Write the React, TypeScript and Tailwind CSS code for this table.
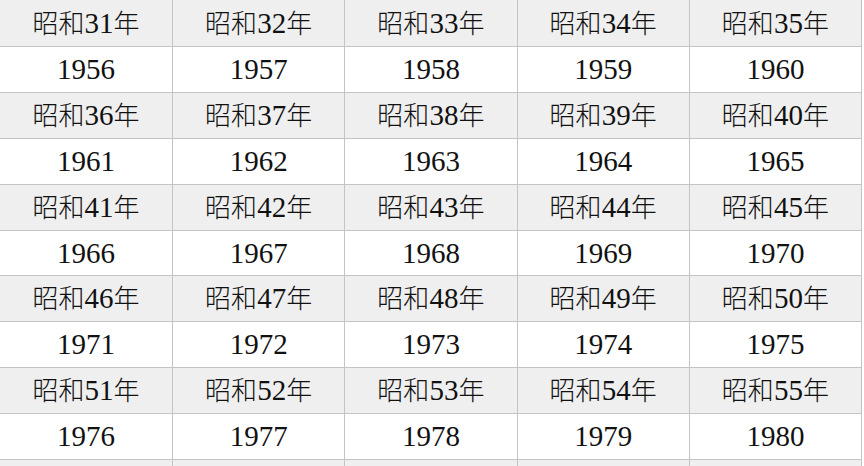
import React from "react";

const starts = [31, 36, 41, 46, 51];

function EraCell({ n, first }: { n: number; first: boolean }) {
  return (
    <div
      className={
        (first ? "h-[47px] " : "h-[45.9px] ") +
        "flex items-center justify-center border-r border-b border-[#c4c4c4] bg-[#efefef] text-[#111]"
      }
    >
      <span className="whitespace-nowrap leading-none">
        <span className="font-['Noto_Sans_CJK_JP',sans-serif] text-[26px] font-light">昭和</span>
        <span className="font-['Liberation_Serif',serif] text-[29px]">{n}</span>
        <span className="font-['Noto_Sans_CJK_JP',sans-serif] text-[26px] font-light">年</span>
      </span>
    </div>
  );
}

function YearCell({ y }: { y: number }) {
  return (
    <div className="h-[45.9px] flex items-center justify-center border-r border-b border-[#c4c4c4] bg-white text-[#111]">
      <span className="font-['Liberation_Serif',serif] text-[29px] leading-none">{y}</span>
    </div>
  );
}

export default function App() {
  return (
    <div className="w-[864px] h-[466px] overflow-hidden bg-white">
      <div className="w-[862px] flex flex-col">
        {starts.map((s, r) => (
          <React.Fragment key={s}>
            <div className="grid grid-cols-[173px_repeat(4,172.25px)]">
              {[0, 1, 2, 3, 4].map((k) => (
                <EraCell key={k} n={s + k} first={r === 0} />
              ))}
            </div>
            <div className="grid grid-cols-[173px_repeat(4,172.25px)]">
              {[0, 1, 2, 3, 4].map((k) => (
                <YearCell key={k} y={1925 + s + k} />
              ))}
            </div>
          </React.Fragment>
        ))}
        <div className="grid grid-cols-[173px_repeat(4,172.25px)]">
          {[0, 1, 2, 3, 4].map((k) => (
            <div key={k} className="h-[45.9px] border-r border-b border-[#c4c4c4] bg-[#efefef]" />
          ))}
        </div>
      </div>
    </div>
  );
}
